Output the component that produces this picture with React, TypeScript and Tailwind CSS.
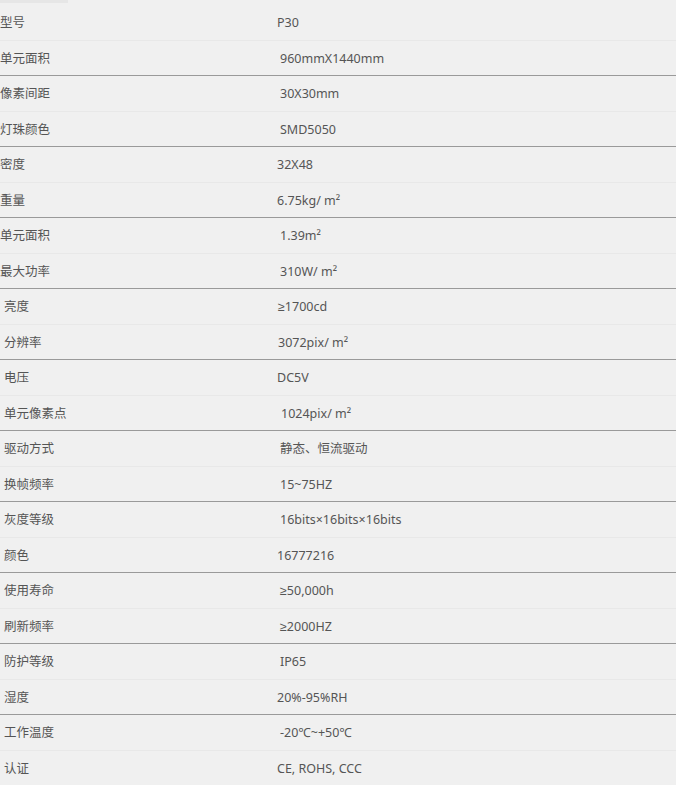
const specs: [string, string, string, string][] = [
  ["型号", "P30", "pl-0", "pl-0"],
  ["单元面积", "960mmX1440mm", "pl-0", "pl-[3px]"],
  ["像素间距", "30X30mm", "pl-0", "pl-[3px]"],
  ["灯珠颜色", "SMD5050", "pl-0", "pl-[3px]"],
  ["密度", "32X48", "pl-0", "pl-0"],
  ["重量", "6.75kg/ m²", "pl-0", "pl-0"],
  ["单元面积", "1.39m²", "pl-0", "pl-[3px]"],
  ["最大功率", "310W/ m²", "pl-0", "pl-[3px]"],
  ["亮度", "≥1700cd", "pl-1", "pl-px"],
  ["分辨率", "3072pix/ m²", "pl-1", "pl-px"],
  ["电压", "DC5V", "pl-1", "pl-0"],
  ["单元像素点", "1024pix/ m²", "pl-1", "pl-1"],
  ["驱动方式", "静态、恒流驱动", "pl-1", "pl-[3px]"],
  ["换帧频率", "15~75HZ", "pl-1", "pl-[3px]"],
  ["灰度等级", "16bits×16bits×16bits", "pl-1", "pl-[3px]"],
  ["颜色", "16777216", "pl-1", "pl-0"],
  ["使用寿命", "≥50,000h", "pl-1", "pl-[3px]"],
  ["刷新频率", "≥2000HZ", "pl-1", "pl-[3px]"],
  ["防护等级", "IP65", "pl-1", "pl-[3px]"],
  ["湿度", "20%-95%RH", "pl-1", "pl-0"],
  ["工作温度", "-20℃~+50℃", "pl-1", "pl-[3px]"],
  ["认证", "CE, ROHS, CCC", "pl-1", "pl-0"],
];

export default function App() {
  return (
    <div className="relative min-h-screen bg-[#f0f0f0] pt-[5px] font-['Noto_Sans','Liberation_Sans','Noto_Sans_CJK_SC',sans-serif] text-[12.5px] text-[#555]">
      <div className="absolute left-0 top-0 h-[3px] w-[68px] bg-[#e6e6e6]" />
      {specs.map(([label, value, labelPad, valuePad], i) => (
        <div
          key={i}
          className={
            "flex h-[35.5px] items-center border-b pt-[3px] " +
            (i % 2 === 1 ? "border-[#9a9a9a]" : "border-[#e8e8e8]")
          }
        >
          <div className={"w-[277px] shrink-0 " + labelPad}>{label}</div>
          <div className={valuePad}>{value}</div>
        </div>
      ))}
    </div>
  );
}
